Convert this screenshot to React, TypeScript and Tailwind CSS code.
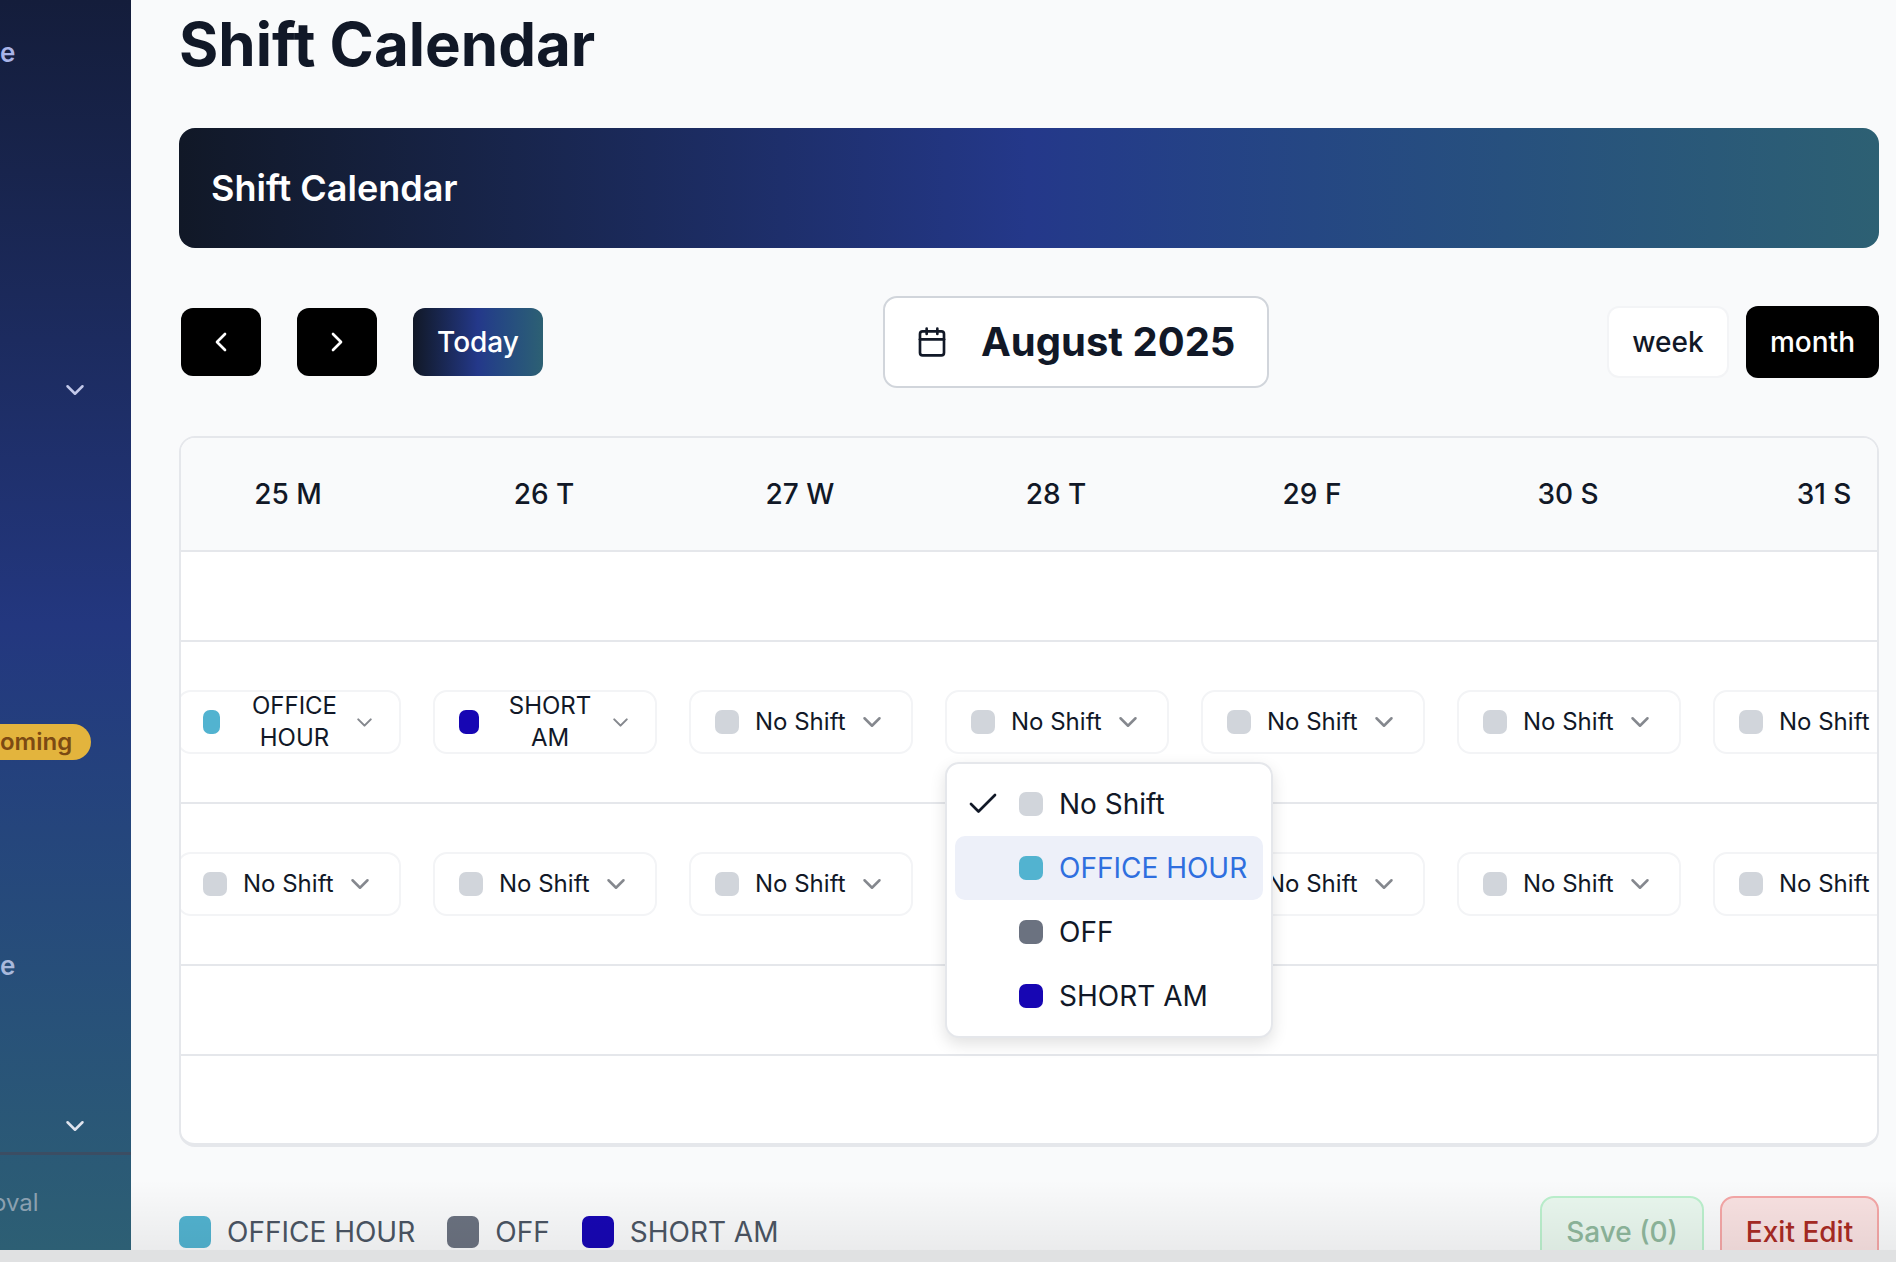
import { Calendar, Check, ChevronDown, ChevronLeft, ChevronRight } from "lucide-react";

const days = ["25 M", "26 T", "27 W", "28 T", "29 F", "30 S", "31 S"];

const shiftColors: Record<string, string> = {
  "No Shift": "bg-[#d1d5db]",
  "OFFICE HOUR": "bg-[#52b3d0]",
  OFF: "bg-[#6b7280]",
  "SHORT AM": "bg-[#1706b3]",
};

const brandGradient = "bg-gradient-to-r from-[#111827] via-[#24388a] to-[#2d6073]";

function ShiftSelect({ shift = "No Shift" }: { shift?: string }) {
  if (shift !== "No Shift") {
    return (
      <div className="flex h-16 w-[224px] items-center rounded-[14px] border-2 border-[#f3f4f6] bg-white pl-6 pr-[22px]">
        <span className={`h-6 shrink-0 rounded-[7px] ${shift === "OFFICE HOUR" ? "w-[17px] mr-[17px]" : "w-5 mr-[13px]"} ${shiftColors[shift]}`} />
        <span className="flex-1 text-center text-[24px] leading-8 text-[#111827]">
          {shift === "OFFICE HOUR" ? (
            <>
              OFFICE
              <br />
              HOUR
            </>
          ) : (
            <>
              SHORT
              <br />
              AM
            </>
          )}
        </span>
        <ChevronDown size={25} strokeWidth={2} className="shrink-0 text-[#85888e]" />
      </div>
    );
  }
  return (
    <div className="flex h-16 w-[224px] shrink-0 items-center rounded-[14px] border-2 border-[#f3f4f6] bg-white pl-6">
      <span className="h-6 w-6 shrink-0 rounded-[7px] bg-[#d1d5db]" />
      <span className="ml-[16px] whitespace-nowrap text-[24px] leading-8 text-[#111827]">No Shift</span>
      <ChevronDown size={30} strokeWidth={2} className="ml-[11px] shrink-0 text-[#85888e]" />
    </div>
  );
}

function ShiftRow({ first, second }: { first?: string; second?: string }) {
  return (
    <div className="grid h-[162px] grid-cols-[repeat(7,256px)] items-center border-b-2 border-[#e5e7eb]">
      {days.map((day, i) => (
        <div key={day} className="flex justify-center pl-0.5">
          <ShiftSelect shift={i === 0 ? first : i === 1 ? second : undefined} />
        </div>
      ))}
    </div>
  );
}

function DropdownItem({ label, checked, active }: { label: string; checked?: boolean; active?: boolean }) {
  return (
    <div className={`flex h-16 items-center rounded-[10px] pl-[18px] ${active ? "bg-[#edf0f9]" : ""}`}>
      <span className="w-[46px] shrink-0">{checked && <Check size={36} strokeWidth={1.8} className="-ml-2 text-[#111827]" />}</span>
      <span className={`h-6 w-6 shrink-0 rounded-[7px] ${shiftColors[label]}`} />
      <span className={`ml-[16px] whitespace-nowrap text-[28px] ${active ? "text-[#2f6fdf]" : "text-[#111827]"}`}>{label}</span>
    </div>
  );
}

function Sidebar() {
  return (
    <aside className="flex w-[131px] shrink-0 flex-col overflow-hidden bg-gradient-to-b from-[#141d3b] via-[#23377f] to-[#2d5f74] font-semibold">
      <span className="mt-[37px] text-[26px] leading-8 text-[#a9b4e8]">e</span>
      <ChevronDown size={30} strokeWidth={2} className="ml-[60px] mt-[306px] text-[#c3c9ea]" />
      <span className="mt-[319px] flex h-9 w-[91px] items-center rounded-r-full bg-[#e3b43d] text-[24px] text-[#7c4a13]">oming</span>
      <span className="mt-[190px] text-[26px] leading-8 text-[#a9b9dc]">e</span>
      <ChevronDown size={30} strokeWidth={2} className="ml-[60px] mt-[129px] text-[#dfe4ee]" />
      <div className="mt-[11px] border-t-[3px] border-[#3b4d63]" />
      <span className="-ml-2 mt-[32px] text-[24px] font-normal leading-8 text-[#8ba0b0]">oval</span>
    </aside>
  );
}

export default function App() {
  return (
    <div className="flex h-[1262px] w-[1896px] flex-col overflow-hidden bg-[#e0e1e2] font-['Inter',sans-serif]">
      <div className="flex h-[1250px] overflow-hidden">
        <Sidebar />
        <main className="relative flex-1 overflow-hidden bg-[#f9fafb] pl-[48px] pr-[17px]">
          <h1 className="mt-[10px] text-[60px] font-bold leading-[68px] text-[#111827]">Shift Calendar</h1>

          <div className={`mt-[50px] flex h-[120px] items-center rounded-2xl px-8 ${brandGradient}`}>
            <h2 className="text-[36px] font-semibold text-white">Shift Calendar</h2>
          </div>

          <div className="mt-[48px] flex h-[92px] items-center">
            <div className="flex w-[704px] items-center gap-9 pl-0.5">
              <button className="flex h-[68px] w-20 items-center justify-center rounded-xl bg-black text-white">
                <ChevronLeft size={32} />
              </button>
              <button className="flex h-[68px] w-20 items-center justify-center rounded-xl bg-black text-white">
                <ChevronRight size={32} />
              </button>
              <button className={`h-[68px] w-[130px] rounded-xl text-[28px] font-medium text-white ${brandGradient}`}>Today</button>
            </div>
            <div className="flex h-[92px] w-[386px] items-center rounded-[14px] border-2 border-[#d1d5db] bg-white pl-[31px]">
              <Calendar size={32} className="shrink-0 text-[#111827]" />
              <span className="ml-[33px] whitespace-nowrap text-[40px] font-bold text-[#111827]">August 2025</span>
            </div>
            <div className="ml-auto flex items-center gap-[17px]">
              <button className="h-[72px] w-[122px] rounded-xl border-2 border-[#f3f4f6] bg-white text-[28px] font-medium text-[#111827]">week</button>
              <button className="h-[72px] w-[133px] rounded-xl bg-black text-[28px] font-medium text-white">month</button>
            </div>
          </div>

          <div className="relative mt-[48px] h-[711px] overflow-hidden rounded-2xl border-2 border-b-4 border-[#e5e7eb] bg-white">
            <div className="-ml-[21px]">
              <div className="grid h-[114px] grid-cols-[repeat(7,256px)] items-center border-b-2 border-[#e5e7eb] bg-[#f9fafb]">
                {days.map((day) => (
                  <div key={day} className="text-center text-[28px] font-medium text-[#111827]">
                    {day}
                  </div>
                ))}
              </div>
              <div className="h-[90px] border-b-2 border-[#e5e7eb]" />
              <ShiftRow first="OFFICE HOUR" second="SHORT AM" />
              <ShiftRow />
              <div className="h-[90px] border-b-2 border-[#e5e7eb]" />
            </div>
          </div>

          <div className="absolute left-[814px] top-[762px] z-10 h-[276px] w-[328px] rounded-[14px] border-2 border-[#e5e7eb] bg-white p-2 shadow-[0_6px_16px_rgba(0,0,0,0.12)]">
            <DropdownItem label="No Shift" checked />
            <DropdownItem label="OFFICE HOUR" active />
            <DropdownItem label="OFF" />
            <DropdownItem label="SHORT AM" />
          </div>

          <div className="mt-[49px] flex items-start">
            <div className="flex items-center pt-5">
              {["OFFICE HOUR", "OFF", "SHORT AM"].map((label) => (
                <div key={label} className="mr-[32px] flex items-center gap-4">
                  <span className={`h-8 w-8 rounded-[7px] ${shiftColors[label]}`} />
                  <span className="whitespace-nowrap text-[28px] leading-8 text-[#4b5563]">{label}</span>
                </div>
              ))}
            </div>
            <div className="ml-auto flex gap-4">
              <button className="h-[72px] w-[164px] rounded-[14px] border-2 border-[#bbf0cd] bg-[#e9f7ee] text-[28px] font-medium text-[#8fb89d]">Save (0)</button>
              <button className="h-[72px] w-[159px] rounded-[14px] border-2 border-[#f4a6a6] bg-[#f8e1e1] text-[28px] font-medium text-[#a92b24]">Exit Edit</button>
            </div>
          </div>

          <div className="pointer-events-none absolute inset-x-0 bottom-0 z-20 h-[70px] bg-gradient-to-b from-transparent to-[rgba(0,0,0,0.06)]" />
        </main>
      </div>
    </div>
  );
}
